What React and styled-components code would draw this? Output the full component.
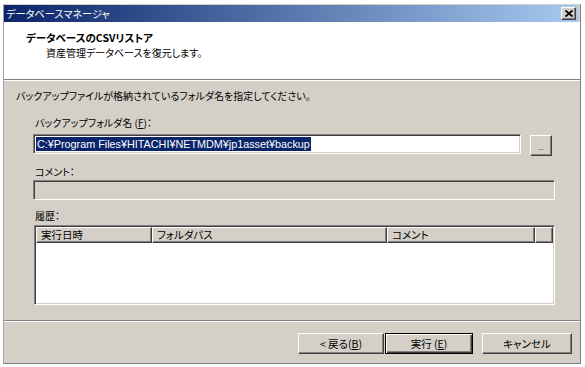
import React from 'react';
import styled, { createGlobalStyle } from 'styled-components';

const GlobalStyle = createGlobalStyle`
  html, body {
    margin: 0;
    padding: 0;
    background: #fff;
  }
  body {
    font-family: 'Noto Sans CJK JP', 'Liberation Sans', sans-serif;
    font-size: 10px;
    color: #000;
    font-feature-settings: 'palt';
  }
`;

const Screen = styled.div`
  padding: 4px 0 0 3px;
`;

const Window = styled.div`
  width: 578px;
  height: 360px;
  box-sizing: border-box;
  display: flex;
  flex-direction: column;
  background: #d4d0c8;
  border: 1px solid;
  border-color: #d4d0c8 #808080 #808080 #a0a0a0;
`;

const TitleBar = styled.div`
  height: 17px;
  margin-right: 2px;
  padding: 0 2px;
  display: flex;
  align-items: center;
  justify-content: space-between;
  background: linear-gradient(to right, #0a246a, #a6caf0);
`;

const TitleText = styled.span`
  color: #fff;
  font-size: 10.2px;
  line-height: 17px;
`;

const CloseButton = styled.div`
  width: 15px;
  height: 13px;
  box-sizing: border-box;
  display: flex;
  align-items: center;
  justify-content: center;
  background: #d4d0c8;
  border: 1px solid;
  border-color: #fff #404040 #404040 #fff;
  box-shadow: inset -1px -1px #808080;
`;

const Header = styled.div`
  height: 58px;
  box-sizing: border-box;
  padding: 9px 0 0 22px;
  background: #fff;
  border-bottom: 1px solid #808080;
`;

const HeaderTitle = styled.div`
  font-weight: bold;
  font-size: 10.5px;
  line-height: 14px;
`;

const HeaderSub = styled.div`
  margin: 1px 0 0 20px;
  line-height: 14px;
`;

const Body = styled.div`
  flex: 1;
  padding: 8px 0 0 12px;
  border-top: 1px solid #fff;
`;

const Instruction = styled.div`
  line-height: 14px;
`;

const Fields = styled.div`
  margin-left: 17px;
`;

const Label = styled.div`
  margin-top: ${p => p.$top}px;
  padding-left: 2px;
  line-height: 14px;
`;

const Row = styled.div`
  display: flex;
  align-items: flex-start;
  gap: 9px;
  margin-top: ${p => p.$top}px;
`;

const TextBox = styled.div`
  width: ${p => p.$w}px;
  height: 20px;
  box-sizing: border-box;
  padding: 2px 0 0 2px;
  margin-top: ${p => p.$top || 0}px;
  background: ${p => (p.$disabled ? '#d4d0c8' : '#fff')};
  border: 1px solid;
  border-color: #808080 #fff #fff #808080;
  box-shadow: inset 1px 1px #404040, inset -1px -1px #d4d0c8;
  font-family: 'Liberation Sans', 'Noto Sans CJK JP', sans-serif;
  font-size: 10.8px;
  line-height: 14px;
`;

const Selected = styled.span`
  display: inline-block;
  padding: 0 1px;
  background: #0a246a;
  color: #fff;
  white-space: nowrap;
`;

const BrowseButton = styled.div`
  width: 22px;
  height: 21px;
  box-sizing: border-box;
  margin-top: 1px;
  display: flex;
  align-items: center;
  justify-content: center;
  padding-top: 3px;
  background: #d4d0c8;
  border: 1px solid;
  border-color: #fff #404040 #404040 #fff;
  box-shadow: inset -1px -1px #808080;
  font-family: 'Liberation Sans', sans-serif;
  font-size: 7px;
`;

const ListView = styled.div`
  width: 521px;
  height: 80px;
  box-sizing: border-box;
  margin: 2px 0 0 1px;
  padding: 1px;
  background: #fff;
  border: 1px solid;
  border-color: #808080 #fff #fff #808080;
  box-shadow: inset 1px 1px #404040, inset -1px -1px #d4d0c8;
`;

const ListHeader = styled.div`
  display: flex;
  height: 16px;
`;

const HeaderCell = styled.div`
  width: ${p => (p.$w ? `${p.$w}px` : 'auto')};
  flex: ${p => (p.$w ? 'none' : 1)};
  box-sizing: border-box;
  padding-left: 4px;
  background: #d4d0c8;
  border: 1px solid;
  border-color: #fff #404040 #404040 #fff;
  box-shadow: inset -1px -1px #808080;
  font-size: 10.5px;
  line-height: 13px;
  white-space: nowrap;
`;

const Footer = styled.div`
  height: 43px;
  box-sizing: border-box;
  padding: 12px 8px 0 0;
  display: flex;
  justify-content: flex-end;
  align-items: flex-start;
  border-top: 1px solid #808080;
  box-shadow: inset 0 1px #fff;
`;

const PushButton = styled.div`
  width: ${p => p.$w}px;
  height: 21px;
  box-sizing: border-box;
  margin-left: ${p => p.$gap}px;
  display: flex;
  align-items: center;
  justify-content: center;
  background: #d4d0c8;
  border: 1px solid;
  border-color: ${p => (p.$default ? '#000' : '#fff #404040 #404040 #fff')};
  box-shadow: ${p =>
    p.$default
      ? 'inset 1px 1px #fff, inset -1px -1px #404040, inset -2px -2px #808080'
      : 'inset -1px -1px #808080'};
  font-size: 10.5px;
  line-height: 14px;
`;

const CloseIcon = () => (
  <svg width="8" height="7" viewBox="0 0 8 7">
    <path d="M0.5 0.5 L7.5 6.5 M7.5 0.5 L0.5 6.5" stroke="#000" strokeWidth="1.8" />
  </svg>
);

const columns = [
  { name: '実行日時', w: 116 },
  { name: 'フォルダパス', w: 235 },
  { name: 'コメント', w: 148 },
  { name: '' },
];

export default function App() {
  return (
    <Screen>
      <GlobalStyle />
      <Window>
        <TitleBar>
          <TitleText>データベースマネージャ</TitleText>
          <CloseButton>
            <CloseIcon />
          </CloseButton>
        </TitleBar>
        <Header>
          <HeaderTitle>データベースのCSVリストア</HeaderTitle>
          <HeaderSub>資産管理データベースを復元します。</HeaderSub>
        </Header>
        <Body>
          <Instruction>バックアップファイルが格納されているフォルダ名を指定してください。</Instruction>
          <Fields>
            <Label $top={13}>
              バックアップフォルダ名 (<u>F</u>)：
            </Label>
            <Row $top={4}>
              <TextBox $w={488}>
                <Selected>C:¥Program Files¥HITACHI¥NETMDM¥jp1asset¥backup</Selected>
              </TextBox>
              <BrowseButton>...</BrowseButton>
            </Row>
            <Label $top={9}>コメント：</Label>
            <TextBox $w={522} $top={1} $disabled />
            <Label $top={9}>履歴：</Label>
            <ListView>
              <ListHeader>
                {columns.map((c, i) => (
                  <HeaderCell key={i} $w={c.w}>
                    {c.name}
                  </HeaderCell>
                ))}
              </ListHeader>
            </ListView>
          </Fields>
        </Body>
        <Footer>
          <PushButton $w={86} $gap={0}>
            &lt; 戻る(<u>B</u>)
          </PushButton>
          <PushButton $w={88} $gap={1} $default>
            実行 (<u>E</u>)
          </PushButton>
          <PushButton $w={90} $gap={9}>
            キャンセル
          </PushButton>
        </Footer>
      </Window>
    </Screen>
  );
}
